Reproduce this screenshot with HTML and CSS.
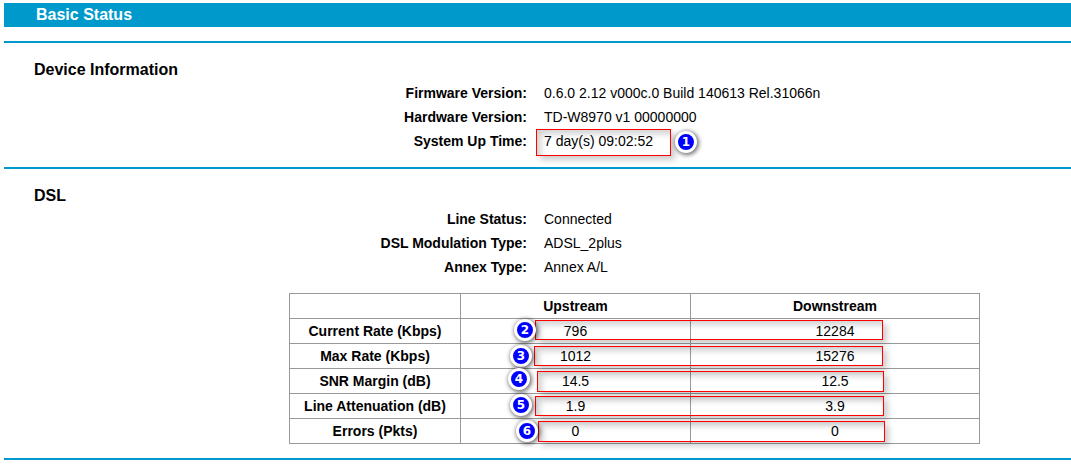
FILE: index.html
```html
<!DOCTYPE html>
<html lang="en">
<head>
<meta charset="utf-8">
<title>Basic Status</title>
<link rel="stylesheet" href="styles.css">
</head>
<body>
<main class="page">
  <h1 class="title">Basic Status</h1>
  <section class="section">
    <h2 class="heading">Device Information</h2>
    <dl class="facts">
      <dt>Firmware Version:</dt><dd>0.6.0 2.12 v000c.0 Build 140613 Rel.31066n</dd>
      <dt>Hardware Version:</dt><dd>TD-W8970 v1 00000000</dd>
      <dt>System Up Time:</dt><dd class="marked">7 day(s) 09:02:52<span class="frame frame-1"></span><span class="badge badge-1">1</span></dd>
    </dl>
  </section>
  <section class="section">
    <h2 class="heading">DSL</h2>
    <dl class="facts">
      <dt>Line Status:</dt><dd>Connected</dd>
      <dt>DSL Modulation Type:</dt><dd>ADSL_2plus</dd>
      <dt>Annex Type:</dt><dd>Annex A/L</dd>
    </dl>
    <div class="stats-wrap">
      <table class="stats">
        <colgroup><col class="col-name"><col class="col-up"><col class="col-down"></colgroup>
        <thead>
          <tr><td></td><th scope="col">Upstream</th><th scope="col">Downstream</th></tr>
        </thead>
        <tbody>
          <tr><th scope="row">Current Rate (Kbps)</th><td>796</td><td>12284</td></tr>
          <tr><th scope="row">Max Rate (Kbps)</th><td>1012</td><td>15276</td></tr>
          <tr><th scope="row">SNR Margin (dB)</th><td>14.5</td><td>12.5</td></tr>
          <tr><th scope="row">Line Attenuation (dB)</th><td>1.9</td><td>3.9</td></tr>
          <tr><th scope="row">Errors (Pkts)</th><td>0</td><td>0</td></tr>
        </tbody>
      </table>
      <span class="frame frame-2"></span><span class="badge badge-2">2</span>
      <span class="frame frame-3"></span><span class="badge badge-3">3</span>
      <span class="frame frame-4"></span><span class="badge badge-4">4</span>
      <span class="frame frame-5"></span><span class="badge badge-5">5</span>
      <span class="frame frame-6"></span><span class="badge badge-6">6</span>
    </div>
  </section>
</main>
</body>
</html>
```
FILE: styles.css
```css
* { box-sizing: border-box; }
body {
  margin: 0;
  background: #fff;
  color: #000;
  font-family: "Liberation Sans", Arial, sans-serif;
  font-size: 14px;
  line-height: 24px;
}
.page { padding: 3px 0 10px 4px; }
.title {
  margin: 0 0 14px;
  padding-left: 32px;
  background: #0099cc;
  color: #fff;
  font-size: 16px;
  line-height: 24px;
}
.section {
  border-top: 2px solid #0099cc;
  padding: 14px 0;
}
.section:last-child { border-bottom: 2px solid #0099cc; }
.heading {
  margin: 0;
  padding: 2px 0 0 30px;
  font-size: 16px;
  line-height: 22px;
}
.facts {
  display: grid;
  grid-template-columns: 523px 1fr;
  column-gap: 17px;
  margin: 0;
}
.facts dt { font-weight: bold; text-align: right; }
.facts dd { margin: 0; }
.marked { position: relative; }

.stats-wrap { position: relative; width: 691px; margin: 14px 0 0 285px; }
.stats { width: 100%; table-layout: fixed; border-collapse: collapse; }
.col-name { width: 171px; }
.col-up { width: 230px; }
.stats th, .stats td {
  height: 25px;
  padding: 0;
  border: 1px solid #999;
  text-align: center;
  line-height: 24px;
}

.frame {
  position: absolute;
  border: 1px solid #f00;
  box-shadow: 4px 4px 6px rgba(0, 0, 0, .2), inset 4px 4px 6px rgba(0, 0, 0, .18);
}
.badge {
  position: absolute;
  width: 22px;
  height: 22px;
  border: 3px solid #fff;
  border-radius: 50%;
  background: #0000ff;
  box-shadow: 1px 1px 4px 1px rgba(0, 0, 0, .55);
  color: #fff;
  font-family: "DejaVu Sans", Verdana, sans-serif;
  font-size: 12px;
  font-weight: bold;
  line-height: 16px;
  text-align: center;
}
.frame-1 { left: -8px; top: 0; width: 135px; height: 27px; }
.badge-1 { left: 131px; top: 2px; }
.frame-2 { left: 246px; top: 27px; width: 348px; height: 20px; }
.badge-2 { left: 225px; top: 26px; }
.frame-3 { left: 245px; top: 53px; width: 349px; height: 20px; }
.badge-3 { left: 221px; top: 52px; }
.frame-4 { left: 248px; top: 78px; width: 347px; height: 21px; }
.badge-4 { left: 219px; top: 75px; }
.frame-5 { left: 246px; top: 103px; width: 349px; height: 20px; }
.badge-5 { left: 221px; top: 101px; }
.frame-6 { left: 249px; top: 128px; width: 347px; height: 21px; }
.badge-6 { left: 227px; top: 127px; }
```
